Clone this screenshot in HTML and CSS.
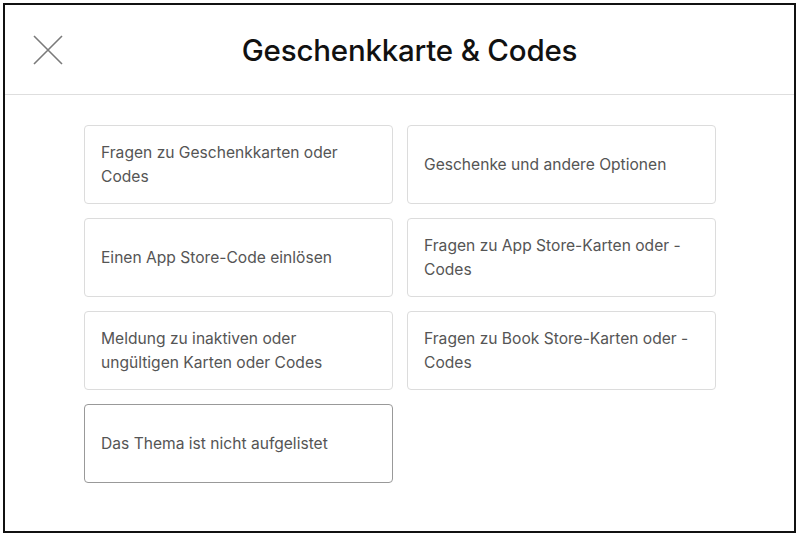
FILE: index.html
```html
<!DOCTYPE html>
<html lang="de">
<head>
  <meta charset="UTF-8" />
  <meta name="viewport" content="width=device-width, initial-scale=1.0"/>
  <title>Geschenkkarte &amp; Codes</title>
  <link rel="stylesheet" href="styles.css">
</head>
<body>
  <div class="frame">
    <div class="header">
      <button class="close" aria-label="Schließen">
        <svg width="30" height="30" viewBox="0 0 30 30">
          <path d="M1 1 L29 29 M29 1 L1 29" stroke="#7a7a7a" stroke-width="1.6" fill="none" />
        </svg>
      </button>
      <h1>Geschenkkarte &amp; Codes</h1>
    </div>

    <div class="topics">
      <a class="topic" href="#">Fragen zu Geschenkkarten oder Codes</a>
      <a class="topic" href="#">Geschenke und andere Optionen</a>
      <a class="topic" href="#">Einen App Store-Code einlösen</a>
      <a class="topic" href="#">Fragen zu App Store-Karten oder -Codes</a>
      <a class="topic" href="#">Meldung zu inaktiven oder ungültigen Karten oder Codes</a>
      <a class="topic" href="#">Fragen zu Book Store-Karten oder -Codes</a>
      <a class="topic active" href="#">Das Thema ist nicht aufgelistet</a>
    </div>
  </div>
</body>
</html>
```

FILE: styles.css
```css
body {
  margin: 0;
  font-family: Inter, 'Noto Sans', sans-serif;
  background: #fff;
  color: #1d1d1f;
}

.frame {
  margin: 3px 4px 3px 3px;
  height: 526px;
  border: 2px solid #111;
  background: #fff;
}

.header {
  position: relative;
  height: 89px;
  border-bottom: 1px solid #dedede;
  display: flex;
  align-items: center;
  justify-content: center;
}

.close {
  position: absolute;
  left: 28px;
  top: 30px;
  padding: 0;
  border: none;
  background: none;
  cursor: pointer;
  line-height: 0;
}

h1 {
  margin: 0 0 0 20px;
  font-size: 29.5px;
  font-weight: 500;
  letter-spacing: -0.2px;
  color: #111;
}

.topics {
  display: grid;
  grid-template-columns: 309px 309px;
  grid-auto-rows: 79px;
  gap: 14px;
  justify-content: center;
  padding-top: 30px;
  padding-left: 1px;
}

.topic {
  display: flex;
  align-items: center;
  padding: 0 16px;
  border: 1px solid #dcdcdc;
  border-radius: 4px;
  font-size: 15.6px;
  line-height: 24px;
  color: #555;
  text-decoration: none;
}

.topic.active {
  border-color: #999;
}
```
